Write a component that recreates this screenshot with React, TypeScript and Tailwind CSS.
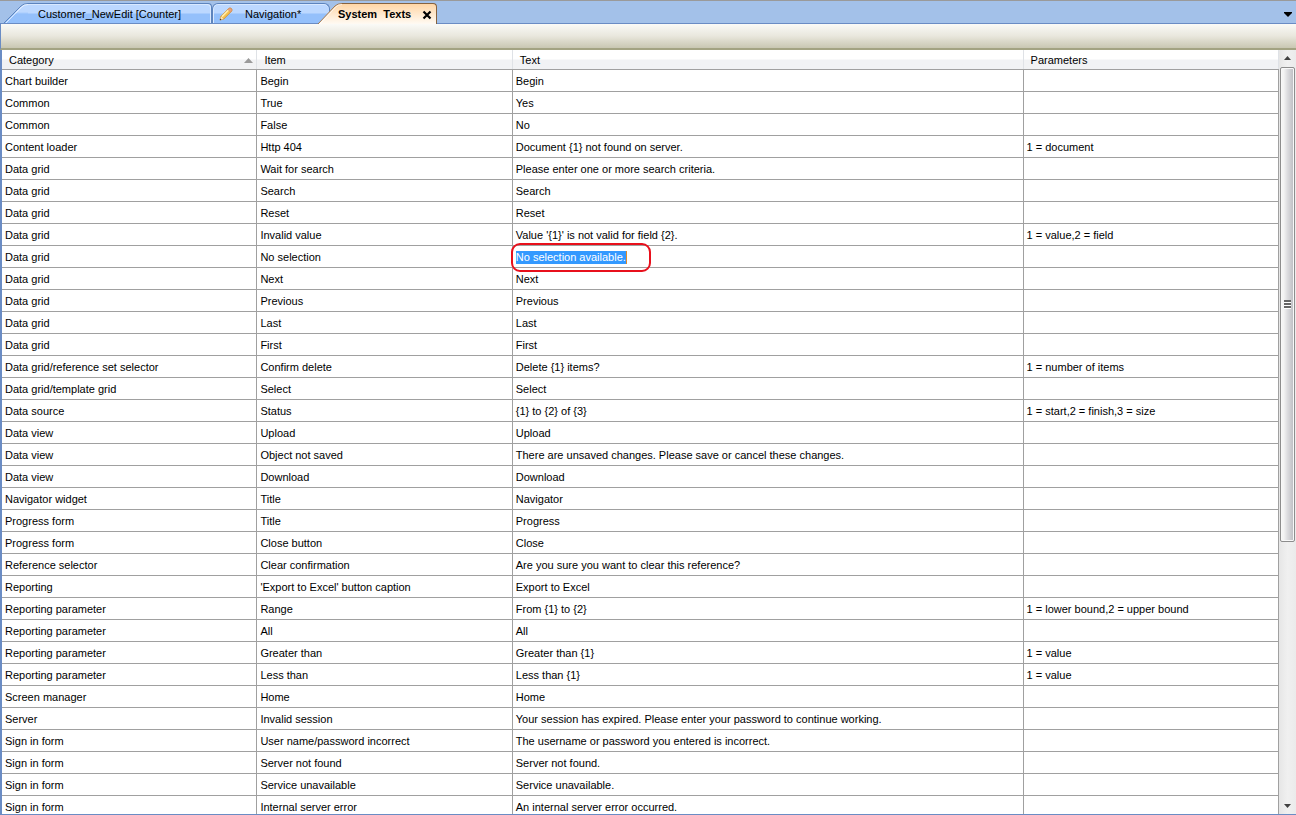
import React from 'react';

type Row = [category: string, item: string, text: string, parameters?: string];

const rows: Row[] = [
  ['Chart builder', 'Begin', 'Begin'],
  ['Common', 'True', 'Yes'],
  ['Common', 'False', 'No'],
  ['Content loader', 'Http 404', 'Document {1} not found on server.', '1 = document'],
  ['Data grid', 'Wait for search', 'Please enter one or more search criteria.'],
  ['Data grid', 'Search', 'Search'],
  ['Data grid', 'Reset', 'Reset'],
  ['Data grid', 'Invalid value', "Value '{1}' is not valid for field {2}.", '1 = value,2 = field'],
  ['Data grid', 'No selection', 'No selection available.'],
  ['Data grid', 'Next', 'Next'],
  ['Data grid', 'Previous', 'Previous'],
  ['Data grid', 'Last', 'Last'],
  ['Data grid', 'First', 'First'],
  ['Data grid/reference set selector', 'Confirm delete', 'Delete {1} items?', '1 = number of items'],
  ['Data grid/template grid', 'Select', 'Select'],
  ['Data source', 'Status', '{1} to {2} of {3}', '1 = start,2 = finish,3 = size'],
  ['Data view', 'Upload', 'Upload'],
  ['Data view', 'Object not saved', 'There are unsaved changes. Please save or cancel these changes.'],
  ['Data view', 'Download', 'Download'],
  ['Navigator widget', 'Title', 'Navigator'],
  ['Progress form', 'Title', 'Progress'],
  ['Progress form', 'Close button', 'Close'],
  ['Reference selector', 'Clear confirmation', 'Are you sure you want to clear this reference?'],
  ['Reporting', "'Export to Excel' button caption", 'Export to Excel'],
  ['Reporting parameter', 'Range', 'From {1} to {2}', '1 = lower bound,2 = upper bound'],
  ['Reporting parameter', 'All', 'All'],
  ['Reporting parameter', 'Greater than', 'Greater than {1}', '1 = value'],
  ['Reporting parameter', 'Less than', 'Less than {1}', '1 = value'],
  ['Screen manager', 'Home', 'Home'],
  ['Server', 'Invalid session', 'Your session has expired. Please enter your password to continue working.'],
  ['Sign in form', 'User name/password incorrect', 'The username or password you entered is incorrect.'],
  ['Sign in form', 'Server not found', 'Server not found.'],
  ['Sign in form', 'Service unavailable', 'Service unavailable.'],
  ['Sign in form', 'Internal server error', 'An internal server error occurred.'],
];

const EDITED_ROW = 8;

function Pencil() {
  return (
    <svg width="14" height="14" viewBox="0 0 14 14" className="block">
      <path d="M1 13 L2 9.2 L9.6 1.6 Q11 .3 12.4 1.6 Q13.7 3 12.4 4.4 L4.8 12 Z" fill="#f5c04c" stroke="#c98a2c" strokeWidth=".8" />
      <path d="M3 9.6 L9.8 2.8" stroke="#ffeeb0" strokeWidth="1.5" />
      <path d="M9.6 1.6 Q11 .3 12.4 1.6 Q13.7 3 12.4 4.4 L11.6 5.2 L8.8 2.4 Z" fill="#eda27c" stroke="#c98a5c" strokeWidth=".5" />
      <path d="M1 13 L2 9.4 L4.6 12 Z" fill="#f8e3c0" />
      <path d="M.8 13.2 L1.3 11.4 L2.6 12.7 Z" fill="#40342c" />
    </svg>
  );
}

type CapStop = [offset: string, color: string];

/* Slanted left cap of a tab; its body continues the same fill and outline. */
function SlantCap({ id, height, stops, stroke }: { id: string; height: number; stops: CapStop[]; stroke: string }) {
  return (
    <svg width="24" height={height} viewBox={`0 0 24 ${height}`} className="block shrink-0">
      <defs>
        <linearGradient id={id} gradientUnits="userSpaceOnUse" x1="0" y1="0" x2="0" y2={height}>
          {stops.map(([offset, color]) => (
            <stop key={offset} offset={offset} stopColor={color} />
          ))}
        </linearGradient>
      </defs>
      <path d={`M0 ${height} L17 3 Q19.500 .5 24 .5 V${height} Z`} fill={`url(#${id})`} />
      <path d={`M0 ${height} L17 3 Q19.500 .5 24 .5`} fill="none" stroke={stroke} />
      <path d={`M2 ${height} L18 3.700 Q20 1.500 24 1.500`} fill="none" stroke="#fff" strokeOpacity=".7" />
    </svg>
  );
}

function TabBar() {
  return (
    <nav className="flex h-6 shrink-0 items-end border-t border-b border-t-[#9a9a9a] border-b-[#6a8cc4] bg-[#a3c1e9] pl-1">
      <button className="flex h-[20px] w-[208px] items-end">
        <SlantCap id="tab-a" height={20} stops={[['45%', '#bcd8ff'], ['55%', '#94c0fb']]} stroke="#5d84bd" />
        <span className="flex h-full flex-1 items-center rounded-tr-sm border-t border-r border-[#5d84bd] bg-linear-to-b from-[#bcd8ff] from-45% to-[#94c0fb] to-55% pt-0.5 pl-2.5 shadow-[inset_-1px_1px_0_#d9e9ff]">
          Customer_NewEdit [Counter]
        </span>
      </button>
      <button className="-mr-3 flex h-[20px] w-[118px] items-center gap-3 rounded-t-md border-t border-r border-l border-[#5d84bd] bg-linear-to-b from-[#bcd8ff] from-45% to-[#94c0fb] to-55% pl-1.5 shadow-[inset_0_1px_0_#d9e9ff,inset_1px_0_0_#d9e9ff]">
        <Pencil />
        <span className="pt-0.5">Navigation*</span>
      </button>
      <div className="z-10 -mb-px flex h-[21px] w-[119px] items-end">
        <SlantCap id="tab-c" height={21} stops={[['0%', '#ffd6a6'], ['100%', '#fffaf3']]} stroke="#a17850" />
        <span className="flex h-full flex-1 items-center justify-between rounded-tr-sm border-t border-r border-[#87633f] bg-linear-to-b from-[#ffd6a6] to-[#fffaf3] pr-1">
          <button className="-ml-1 font-bold">System&nbsp; Texts</button>
          <button aria-label="Close tab" className="pt-px">
            <svg width="10" height="10" viewBox="0 0 10 10" className="block">
              <path d="M1.500 1.500 L8.500 8.500 M8.500 1.500 L1.500 8.500" stroke="#000" strokeWidth="2.200" />
            </svg>
          </button>
        </span>
      </div>
      <button aria-label="List open tabs" className="mr-1 mb-1.5 ml-auto">
        <svg width="8" height="5" viewBox="0 0 8 5" className="block">
          <path d="M0 0 H8 V1 L4 5 L0 1 Z" fill="#000" />
        </svg>
      </button>
    </nav>
  );
}

function ScrollBar() {
  return (
    <div className="flex w-[17px] shrink-0 flex-col bg-linear-to-r from-[#e6e6e6] via-[#f0f0f0] to-[#ebebeb]">
      <button aria-label="Scroll up" className="flex h-4 items-center justify-center">
        <svg width="7" height="4" viewBox="0 0 7 4">
          <path d="M3.500 0 L7 4 H0 Z" fill="#404040" />
        </svg>
      </button>
      <div className="flex-1 pt-px pr-px pl-px">
        <div className="flex h-[65%] flex-col items-center justify-center rounded-xs border border-[#8d8d8d] bg-linear-to-r from-[#f4f4f4] from-20% via-[#dcdcdf] to-[#bcbcc1] shadow-[inset_0_0_0_1px_#f8f8f8]">
          <span className="h-[3px] w-[7px] border-b border-white bg-[#666]" />
          <span className="h-[3px] w-[7px] border-b border-white bg-[#666]" />
          <span className="h-[3px] w-[7px] border-b border-white bg-[#666]" />
        </div>
      </div>
      <button aria-label="Scroll down" className="flex h-[17px] items-center justify-center">
        <svg width="7" height="4" viewBox="0 0 7 4">
          <path d="M0 0 H7 L3.500 4 Z" fill="#404040" />
        </svg>
      </button>
    </div>
  );
}

const headCell =
  'h-5 border-b border-[#a0a0a0] bg-linear-to-b from-white from-45% to-[#f1f2f4] to-55% pt-0.5 pr-2 pb-0 pl-[7px] text-left font-normal shadow-[inset_-1px_0_0_#dfe2e6]';
const bodyCell = 'h-[22px] whitespace-nowrap border-b border-r border-[#a0a0a0] px-[3px] pt-0.5 pb-0';

export default function App() {
  return (
    <div className="flex h-screen flex-col overflow-hidden bg-white font-['Liberation_Sans',Arial,sans-serif] text-[11px] leading-[13px] text-black">
      <TabBar />
      <div className="h-[26px] shrink-0 border-b-2 border-l border-b-[#a3a382] border-l-[#6a8cc4] bg-linear-to-b from-[#fafaf7] via-[#e9e7dd] to-[#c9c7b2]" />
      <main className="flex min-h-0 flex-1 border-b border-l-2 border-[#6a8cc4]">
        <div className="min-w-0 flex-1 overflow-hidden">
          <table className="w-full table-fixed border-separate border-spacing-0">
            <colgroup>
              <col className="w-1/5" />
              <col className="w-1/5" />
              <col className="w-2/5" />
              <col className="w-1/5" />
            </colgroup>
            <thead>
              <tr>
                <th className={headCell} aria-sort="ascending">
                  <span className="flex items-center justify-between">
                    Category
                    <svg width="9" height="5" viewBox="0 0 9 5" className="-mr-1">
                      <path d="M4.500 0 L9 5 H0 Z" fill="#9a9a9a" />
                    </svg>
                  </span>
                </th>
                <th className={headCell}>Item</th>
                <th className={headCell}>Text</th>
                <th className={headCell}>Parameters</th>
              </tr>
            </thead>
            <tbody>
              {rows.map(([category, item, text, parameters], i) => (
                <tr key={i}>
                  <td className={bodyCell}>{category}</td>
                  <td className={bodyCell}>{item}</td>
                  <td className={bodyCell}>
                    {i === EDITED_ROW ? (
                      <span className="relative flex items-center">
                        <input
                          aria-label="Text for No selection"
                          defaultValue={text}
                          className="field-sizing-content h-[13px] border-r border-[#e08a2a] bg-[#3399ff] p-0 text-white outline-none"
                        />
                        <span className="pointer-events-none absolute -top-2 -left-[5px] h-[29px] w-[140px] rounded-[9px] border-2 border-[#e8101c]" />
                      </span>
                    ) : (
                      text
                    )}
                  </td>
                  <td className={bodyCell}>{parameters}</td>
                </tr>
              ))}
            </tbody>
          </table>
        </div>
        <ScrollBar />
      </main>
    </div>
  );
}
